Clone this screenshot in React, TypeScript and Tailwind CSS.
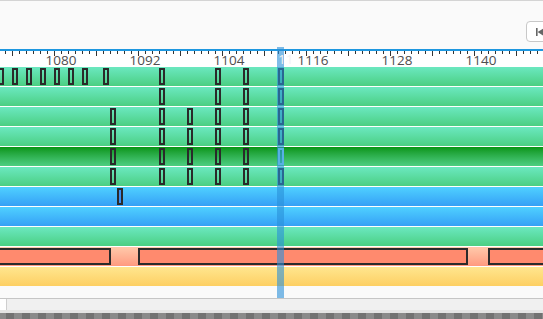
import React from "react";

const PX = 7;
const ORIGIN = 61; // x of 1080
const tx = (t: number) => ORIGIN + (t - 1080) * PX;

type Row = {
  bg: string;
  markers?: number[];
  filled?: boolean;
  blocks?: [number, number][];
};

const green = "bg-linear-to-b from-[#6be8c0] to-[#4bcf82]";
const blue = "bg-linear-to-b from-[#50d0ff] to-[#36a0f6]";
const dense = [1087, 1094, 1098, 1102, 1106, 1111];

const rows: Row[] = [
  { bg: green, markers: [1071, 1073, 1075, 1077, 1079, 1081, 1083, 1086, 1094, 1102, 1106, 1111] },
  { bg: green, markers: [1094, 1102, 1106, 1111] },
  { bg: green, markers: dense },
  { bg: green, markers: dense },
  { bg: "bg-linear-to-b from-[#06950f] to-[#4dcf82]", markers: dense },
  { bg: green, markers: dense },
  { bg: blue, markers: [1088], filled: true },
  { bg: blue },
  { bg: green },
  { bg: "bg-linear-to-b from-[#ffc9ab] to-[#ff9a7f]", blocks: [[-4, 111], [138, 468], [488, 560]] },
  { bg: "bg-linear-to-b from-[#ffe68e] to-[#fdcf62]" },
];

const ticks = Array.from({ length: 78 }, (_, k) => 5 + k * PX);
const labels = [1080, 1092, 1104, 1116, 1128, 1140];

export default function App() {
  return (
    <div className="relative w-[543px] h-[319px] overflow-hidden bg-[#fafafa] font-['Open_Sans',sans-serif]">
      {/* toolbar */}
      <div className="h-[49px] border-t border-[#d4d4d4] flex justify-end items-start pt-[20px]">
        <button className="h-[21px] w-[28px] -mr-[11px] rounded-[4px] border border-[#c8c8c8] bg-white flex items-center pl-[9px]">
          <svg width="10" height="8" viewBox="0 0 10 8">
            <rect x="0" y="0" width="1.6" height="8" fill="#666" />
            <path d="M1.6 4 L8 0 L8 8 Z" fill="#666" />
          </svg>
        </button>
      </div>

      {/* ruler */}
      <div className="h-[17px] border-t-2 border-[#1d97df] bg-white flex flex-col">
        <div className="flex items-start gap-[6px] pl-[5px] h-[2px] overflow-visible">
          {ticks.map((x) => (
            <div
              key={x}
              className={`shrink-0 w-px bg-[#333] ${(x - 12) % 42 === 0 ? "h-[5px]" : "h-[3px]"}`}
            />
          ))}
        </div>
        <div className="flex pl-[19px]">
          {labels.map((l) => (
            <span key={l} className="w-[84px] shrink-0 text-center text-[13.5px] leading-[15px] text-[#4e4e4e]">
              {l}
            </span>
          ))}
        </div>
      </div>

      {/* tracks */}
      <div className="flex flex-col">
        {rows.map((r, i) => (
          <div key={i} className="h-[20px] border-t border-white">
            <div className={`relative h-[19px] overflow-hidden ${r.bg}`}>
              {r.blocks?.map(([a, b]) => (
                <div
                  key={a}
                  className="absolute top-[1px] h-[17px] border-2 border-[#2b2b2b] bg-[#ff8a6e]"
                  style={{ left: a, width: b - a }}
                />
              ))}
              {r.markers?.map((t) => (
                <div
                  key={t}
                  className={`absolute top-[1px] h-[17px] w-[6px] border-2 ${
                    i === 4 && t === 1111 ? "border-[#9ee0f5]" : "border-[#2a2a2a]"
                  } ${r.filled ? "bg-[#3a8ef0]" : ""}`}
                  style={{ left: tx(t) }}
                />
              ))}
            </div>
          </div>
        ))}
      </div>

      <div className="h-[13px] border-b border-[#c6c6c6]" />
      <div className="h-[11px] bg-[#f0f0f0] flex">
        <div className="w-[7px] bg-white border-r border-[#cfcfcf]" />
      </div>
      <div className="h-[3px] bg-[#e4e4e4]" />
      <div className="h-[6px] bg-[repeating-linear-gradient(90deg,#727272_0_8px,#8a8a8a_8px_16px)] bg-[position:6px_0]" />

      {/* playhead */}
      <div className="absolute left-[277px] top-[47px] w-[7px] h-[251px] bg-[#2a8fd8]/60">
        <span className="block pl-px pt-[5px] text-[13.5px] leading-[15px] text-[#f2f2f2] whitespace-nowrap">11</span>
      </div>
    </div>
  );
}
